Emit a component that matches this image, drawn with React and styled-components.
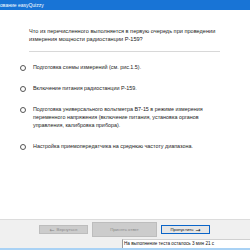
import React from 'react';
import styled, { createGlobalStyle } from 'styled-components';

const Global = createGlobalStyle`
  html, body {
    margin: 0;
    padding: 0;
    background: #ffffff;
    overflow: hidden;
  }
  body {
    font-family: "Liberation Sans", "Noto Sans", sans-serif;
  }
`;

const Window = styled.div`
  width: 250px;
  height: 250px;
  display: flex;
  flex-direction: column;
  background: #ffffff;
`;

const TitleBar = styled.div`
  height: 10px;
  background: #1874d6;
  color: #ffffff;
  font-size: 5px;
  line-height: 10px;
  white-space: nowrap;
  overflow: hidden;
`;

const Body = styled.div`
  flex: 1;
  padding: 16px 0 0 29px;
  display: flex;
  flex-direction: column;
`;

const Question = styled.div`
  font-size: 5.6px;
  line-height: 8px;
  color: #222;
  padding-top: 1px;
  white-space: nowrap;
`;

const Divider = styled.div`
  width: 191px;
  height: 1px;
  background: #d8d8d8;
  margin-top: 8px;
`;

const Options = styled.div`
  display: flex;
  flex-direction: column;
  gap: 13px;
  margin-left: -9px;
  margin-top: 11px;
`;

const Option = styled.label`
  display: flex;
  align-items: flex-start;
  gap: 7px;
  font-size: 5.4px;
  line-height: 8px;
  color: #222;
  white-space: nowrap;
`;

const Radio = styled.span`
  flex: none;
  width: 4px;
  height: 4px;
  margin-top: 2px;
  border: 1px solid #555;
  border-radius: 50%;
`;

const Footer = styled.div`
  border-top: 1px solid #dcdcdc;
  background: #f0f0f0;
  height: 19px;
  display: flex;
  align-items: center;
  padding-left: 39px;
  gap: 4px;
`;

const Button = styled.div`
  height: ${p => (p.big ? 15 : 9)}px;
  width: ${p => p.w}px;
  box-sizing: border-box;
  display: flex;
  align-items: center;
  justify-content: center;
  gap: 2px;
  font-size: 4.3px;
  color: ${p => (p.disabled ? '#8a8a8a' : '#111')};
  background: ${p => (p.primary ? '#e6e6e6' : '#cccccc')};
  border: 1px solid ${p => (p.primary ? '#0a64c8' : '#bdbdbd')};
  white-space: nowrap;
`;

const Arrow = styled.span`
  font-family: "DejaVu Sans", sans-serif;
  font-size: 6px;
  line-height: 5px;
`;

const StatusBar = styled.div`
  height: 9px;
  background: #f0f0f0;
  display: flex;
  justify-content: flex-end;
`;

const Status = styled.div`
  width: 126px;
  background: #ffffff;
  border-left: 1px solid #9a9a9a;
  border-top: 1px solid #d0d0d0;
  font-size: 4.6px;
  line-height: 8px;
  color: #111;
  padding-left: 1px;
  white-space: nowrap;
`;

const Taskbar = styled.div`
  height: 2px;
  background: #a9d2f5;
`;

const options = [
  ['Подготовка схемы измерений (см. рис.1.5).'],
  ['Включение питания радиостанции Р-159.'],
  [
    'Подготовка универсального вольтметра В7-15 в режиме измерения',
    'переменного напряжения (включение питания, установка органов',
    'управления, калибровка прибора).',
  ],
  ['Настройка приемопередатчика на среднюю частоту диапазона.'],
];

export default function App() {
  return (
    <Window>
      <Global />
      <TitleBar>ование easyQuizzy</TitleBar>
      <Body>
        <Question>
          Что из перечисленного выполняется в первую очередь при проведении
          <br />
          измерения мощности радиостанции Р-159?
        </Question>
        <Divider />
        <Options>
          {options.map(lines => (
            <Option key={lines[0]}>
              <Radio />
              <span>
                {lines.map((l, i) => (
                  <React.Fragment key={i}>
                    {i > 0 && <br />}
                    {l}
                  </React.Fragment>
                ))}
              </span>
            </Option>
          ))}
        </Options>
      </Body>
      <Footer>
        <Button w={49} disabled><Arrow>←</Arrow>Вернуться</Button>
        <Button w={65} big disabled>Принять ответ</Button>
        <Button w={49} primary>Пропустить<Arrow>→</Arrow></Button>
      </Footer>
      <StatusBar>
        <Status>На выполнение теста осталось 3 мин 21 с</Status>
      </StatusBar>
      <Taskbar />
    </Window>
  );
}
